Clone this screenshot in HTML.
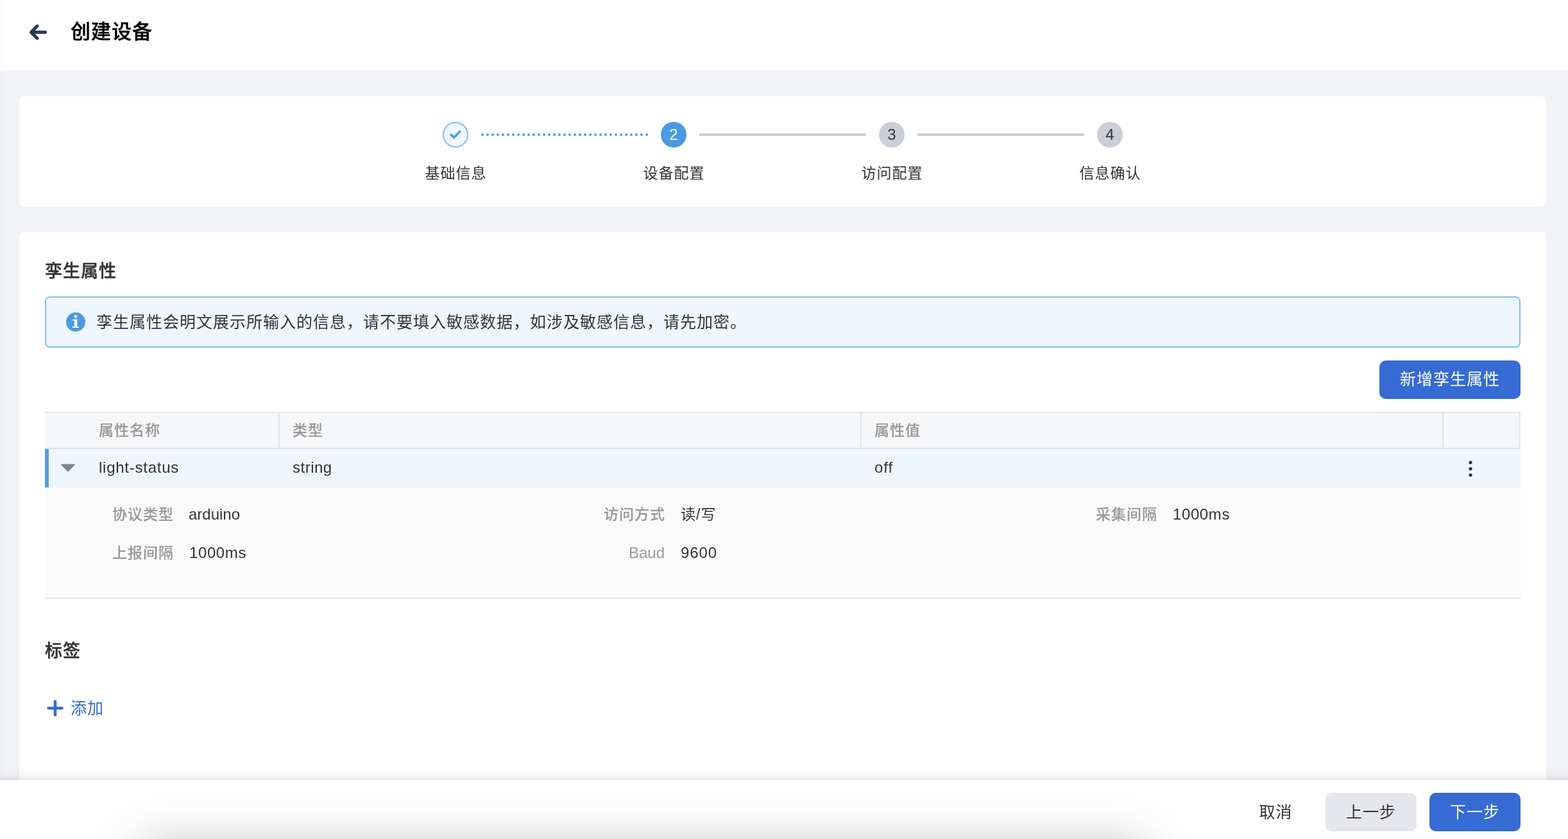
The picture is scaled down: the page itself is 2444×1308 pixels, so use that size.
<!DOCTYPE html>
<html lang="zh-CN">
<head>
<meta charset="utf-8">
<title>创建设备</title>
<style>
*{box-sizing:border-box;margin:0;padding:0}
html,body{width:2444px;height:1308px;overflow:hidden;background:#f1f3f7}
body{position:relative;font-family:"Liberation Sans","Noto Sans CJK SC",sans-serif;color:#333;-webkit-font-smoothing:antialiased}
#root{position:absolute;left:0;top:0;width:2444px;height:1308px;will-change:transform;overflow:hidden}
.abs{position:absolute}
.t{position:absolute;white-space:nowrap;line-height:1}
/* header */
#hdr{left:0;top:0;width:2444px;height:110px;background:#fff}
#title{left:110px;top:31px;font-size:31px;letter-spacing:1px;font-weight:500;-webkit-text-stroke:.45px #000;color:#000;line-height:38px}
/* cards */
.card{background:#fff;border-radius:8px}
#c1{left:30px;top:150px;width:2380px;height:172px}
#c2{left:30px;top:362px;width:2380px;height:960px}
/* steps */
.sc{width:40px;height:40px;border-radius:50%;top:190px;text-align:center;font-size:24px;line-height:40px}
.sl{top:256px;width:200px;padding-left:1px;text-align:center;font-size:23px;letter-spacing:1px;line-height:28px;color:#333}
.ln{top:208px;height:4px;width:260px;background:#cbced8}
/* section */
.h2{font-size:27px;letter-spacing:1px;font-weight:500;-webkit-text-stroke:.45px #333;color:#333;line-height:34px}
#alert{left:70px;top:462px;width:2300px;height:80px;border:2px solid #86c0ed;border-radius:8px;background:#eef6fe}
#alerttxt{left:150px;top:486px;font-size:25px;letter-spacing:1px;line-height:32px;color:#333}
.btn{border-radius:10px;text-align:center;font-size:25px;letter-spacing:1px;padding-left:0;white-space:nowrap}
.pri{background:#356bd3;color:#fff}
/* table */
#thead{left:70px;top:642px;width:2300px;height:58px;background:#f6f7f9;border-top:2px solid #e3e4ea;border-bottom:2px solid #e3e4ea;border-right:2px solid #e3e4ea}
.vs{top:644px;width:2px;height:54px;background:#e3e4ea}
.th{top:656px;font-size:23px;letter-spacing:1px;line-height:30px;color:#999;font-weight:500;-webkit-text-stroke:.2px #999}
#row{left:70px;top:700px;width:2300px;height:60px;background:#eef6fe;border-left:6px solid #559de0}
.td{top:714px;font-size:24px;line-height:30px;color:#333}
#exp{left:70px;top:760px;width:2300px;height:174px;background:#fafafa;border-bottom:2px solid #ebebee}
.dl{font-size:23px;letter-spacing:1px;line-height:30px;color:#999;font-weight:500;-webkit-text-stroke:.12px #999;text-align:right;width:201px;margin-top:0}
.dv{font-size:24px;line-height:30px;color:#333}
/* footer */
#ftr{left:-60px;top:1216px;width:2564px;height:160px;background:#fff;box-shadow:0 -2px 18px rgba(0,0,0,.14);overflow:hidden}
</style>
</head>
<body><div id="root">
<!-- header -->
<div id="hdr" class="abs"></div>
<svg class="abs" style="left:40px;top:30px" width="40" height="40" viewBox="0 0 40 40"><path d="M18 10.75 L8.5 20.25 L18 29.75 M9.5 20.25 H30.6" fill="none" stroke="#253858" stroke-width="5" stroke-linecap="round" stroke-linejoin="round"/></svg>
<div id="title" class="t">创建设备</div>

<!-- steps card -->
<div id="c1" class="abs card"></div>
<div class="abs sc" style="left:690px;background:#eef6fe;border:2px solid #86c0ed"></div>
<svg class="abs" style="left:690px;top:190px" width="40" height="40" viewBox="0 0 40 40"><path d="M12.1 19.2 L17.6 24.4 L27.8 14.1" fill="none" stroke="#4a9ae1" stroke-width="3.5" stroke-linecap="butt" stroke-linejoin="miter"/></svg>
<svg class="abs" style="left:750px;top:206px" width="260" height="8" viewBox="0 0 260 8"><line x1="2" y1="4" x2="259" y2="4" stroke="#4a9ae1" stroke-width="4" stroke-linecap="round" stroke-dasharray="0 8"/></svg>
<div class="abs sc" style="left:1030px;background:#4a9ae1;color:#fff">2</div>
<div class="abs ln" style="left:1090px"></div>
<div class="abs sc" style="left:1370px;background:#cbced8;color:#333">3</div>
<div class="abs ln" style="left:1430px"></div>
<div class="abs sc" style="left:1710px;background:#cbced8;color:#333">4</div>
<div class="t sl" style="left:610px">基础信息</div>
<div class="t sl" style="left:950px">设备配置</div>
<div class="t sl" style="left:1290px">访问配置</div>
<div class="t sl" style="left:1630px">信息确认</div>

<!-- main card -->
<div id="c2" class="abs card"></div>
<div class="t h2" style="left:70px;top:406px">孪生属性</div>
<div id="alert" class="abs"></div>
<svg class="abs" style="left:103px;top:487px" width="30" height="30" viewBox="0 0 30 30"><circle cx="15" cy="15" r="15" fill="#4a9ae1"/><circle cx="15" cy="6.3" r="2.35" fill="#fff"/><path d="M10.6 10.85 H17.3 V22 H20 V24.05 H9.9 V22 H12.9 V13.1 H10.6 Z" fill="#fff"/></svg>
<div id="alerttxt" class="t">孪生属性会明文展示所输入的信息，请不要填入敏感数据，如涉及敏感信息，请先加密。</div>
<div class="abs btn pri" style="left:2150px;top:562px;width:220px;height:60px;line-height:59px">新增孪生属性</div>

<!-- table -->
<div id="thead" class="abs"></div>
<div class="abs vs" style="left:434px"></div>
<div class="abs vs" style="left:1341px"></div>
<div class="abs vs" style="left:2248px"></div>
<div class="t th" style="left:154px">属性名称</div>
<div class="t th" style="left:456px">类型</div>
<div class="t th" style="left:1363px">属性值</div>
<div id="row" class="abs"></div>
<svg class="abs" style="left:94px;top:722px" width="24" height="14" viewBox="0 0 24 14"><path d="M2.2 2.4 H21.8 L12 12.2 Z" fill="#82858e" stroke="#82858e" stroke-width="2" stroke-linejoin="round"/></svg>
<div class="t td" style="left:154px;letter-spacing:.75px">light-status</div>
<div class="t td" style="left:456px;letter-spacing:.5px">string</div>
<div class="t td" style="left:1363px;letter-spacing:1px">off</div>
<svg class="abs" style="left:2286px;top:716px" width="12" height="30" viewBox="0 0 12 30"><circle cx="6" cy="5" r="2.6" fill="#253044"/><circle cx="6" cy="14.8" r="2.6" fill="#253044"/><circle cx="6" cy="24.6" r="2.6" fill="#253044"/></svg>

<!-- expanded -->
<div id="exp" class="abs"></div>
<div class="t dl" style="left:70px;top:787px">协议类型</div>
<div class="t dv" style="left:294px;top:787px">arduino</div>
<div class="t dl" style="left:836px;top:787px">访问方式</div>
<div class="t dv" style="left:1061px;top:787px;font-size:23px;letter-spacing:1px">读/写</div>
<div class="t dl" style="left:1603px;top:787px">采集间隔</div>
<div class="t dv" style="left:1828px;top:787px;letter-spacing:.6px">1000ms</div>
<div class="t dl" style="left:70px;top:847px">上报间隔</div>
<div class="t dv" style="left:295px;top:847px;letter-spacing:.6px">1000ms</div>
<div class="t dl" style="left:836px;top:847px;-webkit-text-stroke:0;font-size:24px;letter-spacing:0;width:200px">Baud</div>
<div class="t dv" style="left:1061px;top:847px;letter-spacing:.9px">9600</div>

<!-- tags -->
<div class="t h2" style="left:70px;top:998px">标签</div>
<svg class="abs" style="left:71px;top:1089px" width="30" height="30" viewBox="0 0 30 30"><path d="M15 4.5 V25.5 M4.5 15 H25.5" fill="none" stroke="#356bd3" stroke-width="4.6" stroke-linecap="round"/></svg>
<div class="t" style="left:110px;top:1088px;font-size:25px;letter-spacing:1px;line-height:32px;color:#356bd3">添加</div>

<div class="abs" style="left:0;top:0;width:7px;height:1308px;background:linear-gradient(90deg,rgba(0,0,0,.012) 0,rgba(0,0,0,.012) 3px,rgba(0,0,0,.005) 3px,rgba(0,0,0,.005) 7px)"></div>
<!-- footer -->
<div id="ftr" class="abs">
  <div class="abs" style="left:280px;top:106px;width:1562px;height:100px;box-shadow:0 0 80px 0 rgba(0,0,0,.29)"></div>
</div>
<div class="t" style="left:1888px;top:1250px;width:200px;padding-left:1px;text-align:center;font-size:25px;letter-spacing:1px;line-height:32px;color:#333">取消</div>
<div class="abs btn" style="left:2066px;top:1236px;width:142px;height:60px;line-height:60px;background:#e6e7ec;color:#333">上一步</div>
<div class="abs btn pri" style="left:2228px;top:1236px;width:142px;height:60px;line-height:60px">下一步</div>
</div></body>
</html>
